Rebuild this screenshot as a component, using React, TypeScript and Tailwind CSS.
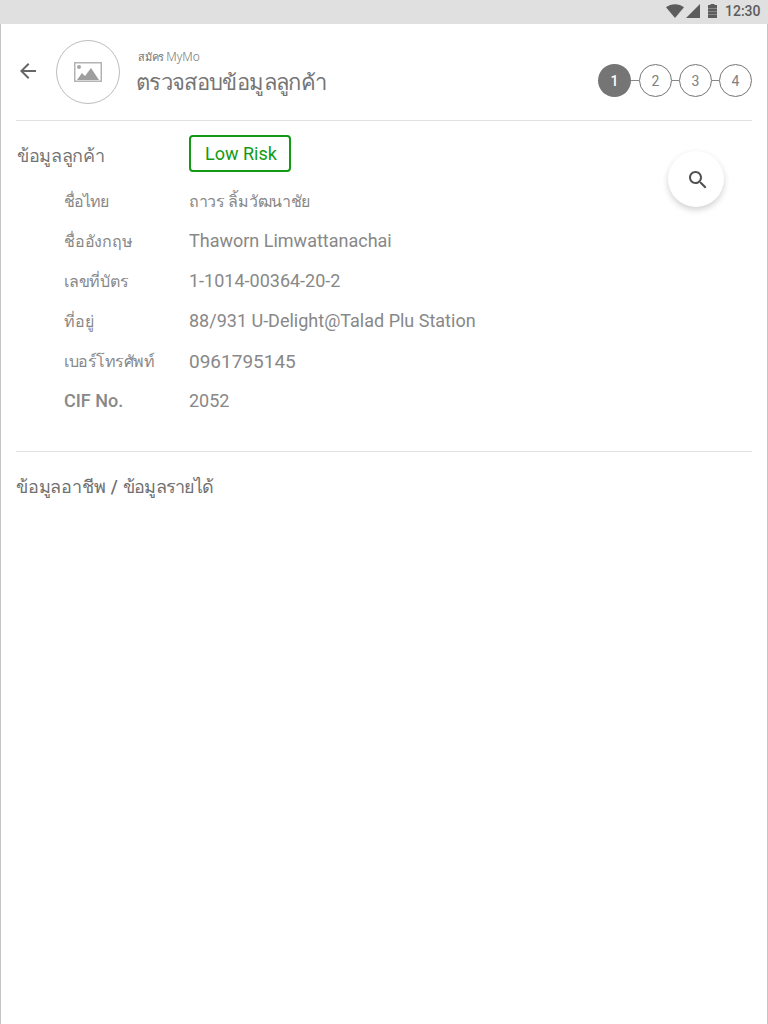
import { Fragment } from 'react';

type Detail = { label: string; value: string; labelClass: string; valueClass: string };

const details: Detail[] = [
  { label: 'ชื่อไทย', value: 'ถาวร ลิ้มวัฒนาชัย', labelClass: 'pt-[2px] text-base tracking-[-1px]', valueClass: 'pt-[2px] text-base tracking-[-0.3px]' },
  { label: 'ชื่ออังกฤษ', value: 'Thaworn Limwattanachai', labelClass: 'pt-[2px] text-base tracking-[-0.2px]', valueClass: 'text-lg' },
  { label: 'เลขที่บัตร', value: '1-1014-00364-20-2', labelClass: 'pt-[2px] text-base tracking-[-0.2px]', valueClass: 'text-lg' },
  { label: 'ที่อยู่', value: '88/931 U-Delight@Talad Plu Station', labelClass: 'pt-[2px] text-base tracking-[-0.2px]', valueClass: 'text-lg' },
  { label: 'เบอร์โทรศัพท์', value: '0961795145', labelClass: 'pt-[2px] text-base tracking-[-0.45px]', valueClass: 'pt-px text-[19px]' },
  { label: 'CIF No.', value: '2052', labelClass: 'text-lg font-medium', valueClass: 'text-lg' },
];

function StatusBar() {
  return (
    <div className="flex h-6 items-center justify-end bg-[#e0e0e0] pr-[7.500px] text-[#5c5c5c]">
      <svg className="mr-[2px] -mt-[2px]" width="18" height="16" viewBox="0 0 18 16" fill="currentColor">
        <path d="M0 4.2C5.2.2 12.800.2 18 4.200L9 15Z" />
      </svg>
      <svg className="mr-[8px] -mt-[2px]" width="14" height="14" viewBox="0 0 14 14" fill="currentColor">
        <path d="M14 0V14H0Z" />
      </svg>
      <svg className="mr-[8px] -mt-[2px]" width="9" height="14" viewBox="0 0 9 14" fill="currentColor">
        <path d="M2.500 0h4v1H9v13H0V1h2.500Z" />
        <path d="M0 4.500h9M0 7.500h9M0 10.500h9" stroke="#999" strokeWidth=".7" />
      </svg>
      <span className="-mt-[2px] text-sm font-medium leading-6">12:30</span>
    </div>
  );
}

function Stepper() {
  return (
    <div className="mt-[18px] flex items-center">
      {[1, 2, 3, 4].map((n) => (
        <Fragment key={n}>
          {n > 1 && <span className={n === 2 ? 'h-px w-2 bg-[#888]' : 'h-px w-[7px] bg-[#888]'} />}
          <span
            className={
              n === 1
                ? 'flex size-[33px] items-center justify-center rounded-full bg-[#757575] text-sm font-medium text-white'
                : 'flex size-[33px] items-center justify-center rounded-full border border-[#757575] text-sm text-[#808080]'
            }
          >
            {n}
          </span>
        </Fragment>
      ))}
    </div>
  );
}

export default function App() {
  return (
    <div className="flex h-screen flex-col overflow-hidden bg-white font-['Roboto','Noto_Sans',sans-serif] text-[#757575]">
      <StatusBar />
      <main className="flex-1 border-x border-[#c4c4c4] px-[15px]">
        <header className="flex h-[97px] border-b border-[#e2e2e2] pt-4">
          <svg className="mt-[19px]" width="24" height="24" viewBox="0 0 24 24" fill="#666">
            <path d="M20 11H7.830l5.590-5.590L12 4l-8 8 8 8 1.410-1.410L7.830 13H20v-2z" />
          </svg>
          <div className="ml-4 flex size-16 items-center justify-center rounded-full border border-[#bdbdbd]">
            <svg width="28" height="20" viewBox="0 0 28 20">
              <rect x=".75" y=".75" width="26.500" height="18.500" fill="none" stroke="#b3b3b3" strokeWidth="1.500" />
              <circle cx="5" cy="5" r="2" fill="#a6a6a6" />
              <path d="M3 18l5-7 3 3 6-8 8 12Z" fill="#9e9e9e" />
            </svg>
          </div>
          <div className="ml-4 flex flex-1 flex-col whitespace-nowrap">
            <div className="mt-[9px] flex h-4 items-baseline gap-[2px] pl-[2px] leading-4">
              <span className="text-[11px] tracking-[-0.2px]">สมัคร</span>
              <span className="font-['Noto_Sans',sans-serif] text-xs font-light">MyMo</span>
            </div>
            <h1 className="mt-[2px] h-8 text-[22px] leading-8 tracking-[-0.65px]">ตรวจสอบข้อมูลลูกค้า</h1>
          </div>
          <div className="mt-[6px]"><Stepper /></div>
        </header>

        <section className="flex h-[331px] flex-col border-b border-[#e2e2e2]">
          <div className="flex h-[60px] items-start justify-between pt-[14px]">
            <div className="flex">
              <h2 className="mt-[7px] w-[173px] pl-px text-lg leading-7 tracking-[-0.35px]">ข้อมูลลูกค้า</h2>
              <span className="flex h-[37px] w-[102px] items-center justify-center rounded border-2 border-[#129b12] pl-[2px] text-lg text-[#129b12]">Low Risk</span>
            </div>
            <button aria-label="search" className="mr-7 mt-4 flex size-14 shrink-0 items-center justify-center rounded-full bg-white pl-1 pt-[2px] shadow-[0_3px_6px_rgba(0,0,0,0.18)]">
              <svg width="24" height="24" viewBox="0 0 24 24" fill="#505050">
                <path d="M15.500 14h-.79l-.28-.27C15.410 12.590 16 11.110 16 9.500 16 5.910 13.090 3 9.500 3S3 5.910 3 9.500 5.910 16 9.500 16c1.610 0 3.090-.59 4.230-1.570l.27.28v.79l5 4.990L20.490 19l-4.990-5zm-6 0C7.010 14 5 11.990 5 9.500S7.010 5 9.500 5 14 7.010 14 9.500 11.990 14 9.500 14z" />
              </svg>
            </button>
          </div>
          <dl className="text-[#888]">
            {details.map((d) => (
              <div key={d.label} className="flex h-10 items-center whitespace-nowrap pl-12">
                <dt className={`w-[125px] leading-6 ${d.labelClass}`}>{d.label}</dt>
                <dd className={`leading-6 ${d.valueClass}`}>{d.value}</dd>
              </div>
            ))}
          </dl>
        </section>

        <h2 className="pt-[21px] text-lg leading-7 text-[#707070]">
          <span className="tracking-[-0.2px]">ข้อมูลอาชีพ </span>
          <span className="pl-px font-medium">/ </span>
          <span className="pl-px tracking-[-0.85px]">ข้อมูลรายได้</span>
        </h2>
      </main>
    </div>
  );
}
